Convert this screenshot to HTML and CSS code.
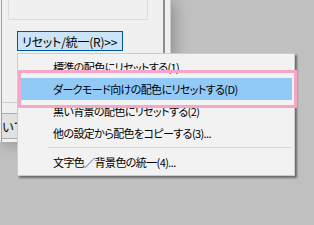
FILE: index.html
```html
<!DOCTYPE html>
<html lang="ja">
<head>
    <meta charset="UTF-8">
    <meta name="viewport" content="width=device-width, initial-scale=1.0">
    <title>配色のリセット</title>
    <link rel="stylesheet" href="styles.css">
</head>
<body class="screen">
    <div class="dialog">
        <div class="pane">
            <div class="groupbox"></div>
            <button class="resetBtn">リセット/統一(R)&gt;&gt;</button>
            <div class="rule"></div>
            <button class="hiddenBtn">いて</button>
        </div>
        <div class="edge"></div>
    </div>

    <div class="menu">
        <div class="menuItem">標準の配色にリセットする(1)</div>
        <div class="menuItem active">ダークモード向けの配色にリセットする(D)</div>
        <div class="menuItem">黒い背景の配色にリセットする(2)</div>
        <div class="menuItem">他の設定から配色をコピーする(3)...</div>
        <div class="menuSep"></div>
        <div class="menuItem">文字色／背景色の統一(4)...</div>
    </div>

    <div class="marker"></div>
</body>
</html>
```

FILE: styles.css
```css
html, body {
    margin: 0;
    padding: 0;
}
.screen {
    width: 314px;
    height: 225px;
    overflow: hidden;
    background-color: #c0c0c0;
    font-family: "Noto Sans CJK JP", "Noto Sans", sans-serif;
    font-size: 12px;
    font-feature-settings: "palt";
    color: #000;
    position: relative;
}
.dialog {
    display: flex;
    width: 171px;
    height: 142px;
    background-color: #f0f0f0;
    box-shadow: 4px 2px 14px rgba(0, 0, 0, 0.25);
}
.pane {
    width: 161px;
    margin-left: 1px;
    border-left: 1px solid #a0a0a0;
    border-right: 2px solid #8c8c8c;
    overflow: hidden;
}
.edge {
    flex: 1;
    border-right: 1px solid #c8c8c8;
}
.groupbox {
    width: 138px;
    height: 19px;
    margin-left: 6px;
    border: 1px solid #dcdcdc;
    border-top: none;
}
.resetBtn {
    display: block;
    margin: 11px 0 0 15px;
    width: 106px;
    height: 20px;
    padding: 0 0 0 4px;
    text-align: left;
    font-family: inherit;
    font-size: 12px;
    letter-spacing: -0.2px;
    font-feature-settings: "palt";
    background-color: #cce4f7;
    border: 1px solid #005499;
    color: #000;
}
.rule {
    height: 1px;
    margin-top: 51px;
    background-color: #d0d0d0;
}
.hiddenBtn {
    display: block;
    margin: 10px 0 0 -1px;
    width: 80px;
    height: 26px;
    padding: 0;
    text-align: left;
    font-family: inherit;
    font-size: 12px;
    background-color: #e1e1e1;
    border: 1px solid #adadad;
    color: #000;
}

/* popup menu */
.menu {
    position: absolute;
    left: 17px;
    top: 53px;
    width: 272px;
    padding: 2px;
    background-color: #f2f2f2;
    border: 1px solid #cccccc;
    box-shadow: 2px 2px 2px rgba(0, 0, 0, 0.45);
    font-size: 11px;
    letter-spacing: -0.6px;
}
.menuItem {
    height: 22px;
    line-height: 22px;
    padding-left: 33px;
    white-space: nowrap;
}
.menuItem.active {
    background-color: #91c9f7;
}
.menuSep {
    height: 1px;
    margin: 3px 0 3px 28px;
    background-color: #d7d7d7;
}

/* annotation */
.marker {
    position: absolute;
    left: 18px;
    top: 70px;
    width: 273px;
    height: 32px;
    border: 3px solid #f4a7c6;
    border-radius: 1px;
}
```
